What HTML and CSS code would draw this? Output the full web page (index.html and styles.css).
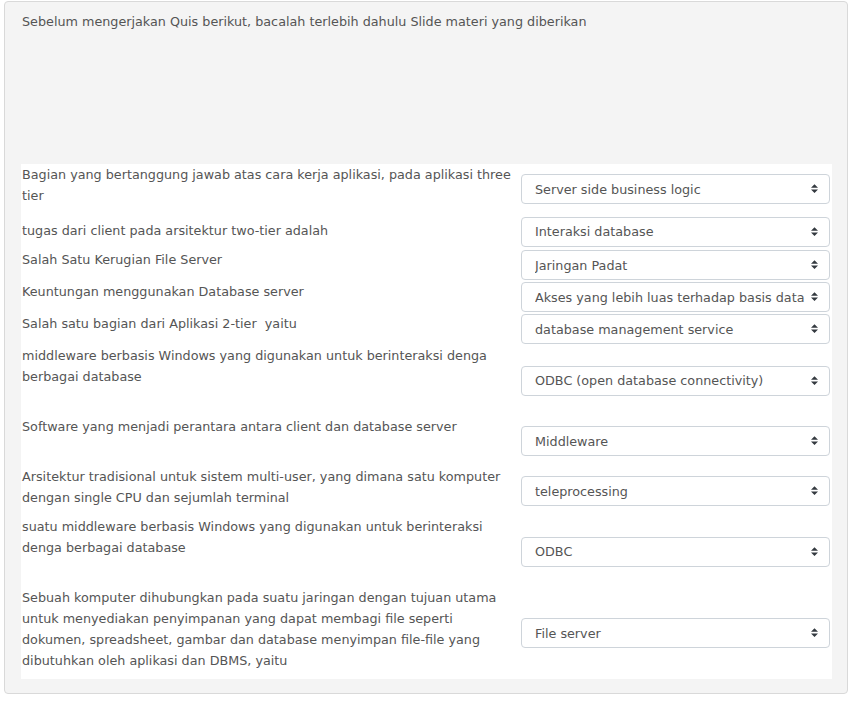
FILE: index.html
```html
<!DOCTYPE html>
<html lang="id">
<head>
<meta charset="utf-8">
<title>Quis</title>
<link rel="stylesheet" href="styles.css">
</head>
<body>
<div class="que">
  <div class="qtext">
    <p class="intro">Sebelum mengerjakan Quis berikut, bacalah terlebih dahulu Slide materi yang diberikan</p>
    <div class="media"></div>
  </div>
  <div class="answer">
    <div class="row">
      <div class="text"><p>Bagian yang bertanggung jawab atas cara kerja aplikasi, pada aplikasi three tier</p></div>
      <div class="control"><span class="sel"><select><option>Server side business logic</option></select><svg class="arrow" viewBox="0 0 4 5" width="7" height="9"><path d="M2 0L0 2h4zm0 5L0 3h4z"/></svg></span></div>
    </div>
    <div class="row">
      <div class="text pad-top"><p>tugas dari client pada arsitektur two-tier adalah</p></div>
      <div class="control"><span class="sel"><select><option>Interaksi database</option></select><svg class="arrow" viewBox="0 0 4 5" width="7" height="9"><path d="M2 0L0 2h4zm0 5L0 3h4z"/></svg></span></div>
    </div>
    <div class="row">
      <div class="text"><p>Salah Satu Kerugian File Server</p></div>
      <div class="control"><span class="sel"><select><option>Jaringan Padat</option></select><svg class="arrow" viewBox="0 0 4 5" width="7" height="9"><path d="M2 0L0 2h4zm0 5L0 3h4z"/></svg></span></div>
    </div>
    <div class="row">
      <div class="text"><p>Keuntungan menggunakan Database server</p></div>
      <div class="control"><span class="sel"><select><option>Akses yang lebih luas terhadap basis data</option></select><svg class="arrow" viewBox="0 0 4 5" width="7" height="9"><path d="M2 0L0 2h4zm0 5L0 3h4z"/></svg></span></div>
    </div>
    <div class="row">
      <div class="text"><p>Salah satu bagian dari Aplikasi 2-tier&nbsp; yaitu</p></div>
      <div class="control"><span class="sel"><select><option>database management service</option></select><svg class="arrow" viewBox="0 0 4 5" width="7" height="9"><path d="M2 0L0 2h4zm0 5L0 3h4z"/></svg></span></div>
    </div>
    <div class="row">
      <div class="text"><p>middleware berbasis Windows yang digunakan untuk berinteraksi denga berbagai database<br><br></p></div>
      <div class="control"><span class="sel"><select><option>ODBC (open database connectivity)</option></select><svg class="arrow" viewBox="0 0 4 5" width="7" height="9"><path d="M2 0L0 2h4zm0 5L0 3h4z"/></svg></span></div>
    </div>
    <div class="row">
      <div class="text"><p>Software yang menjadi perantara antara client dan database server<br><br></p></div>
      <div class="control"><span class="sel"><select><option>Middleware</option></select><svg class="arrow" viewBox="0 0 4 5" width="7" height="9"><path d="M2 0L0 2h4zm0 5L0 3h4z"/></svg></span></div>
    </div>
    <div class="row">
      <div class="text"><p>Arsitektur tradisional untuk sistem multi-user, yang dimana satu komputer dengan single CPU dan sejumlah terminal</p></div>
      <div class="control"><span class="sel"><select><option>teleprocessing</option></select><svg class="arrow" viewBox="0 0 4 5" width="7" height="9"><path d="M2 0L0 2h4zm0 5L0 3h4z"/></svg></span></div>
    </div>
    <div class="row">
      <div class="text"><p>suatu middleware berbasis Windows yang digunakan untuk berinteraksi denga berbagai database<br><br></p></div>
      <div class="control"><span class="sel"><select><option>ODBC</option></select><svg class="arrow" viewBox="0 0 4 5" width="7" height="9"><path d="M2 0L0 2h4zm0 5L0 3h4z"/></svg></span></div>
    </div>
    <div class="row">
      <div class="text"><p>Sebuah komputer dihubungkan pada suatu jaringan dengan tujuan utama untuk menyediakan penyimpanan yang dapat membagi file seperti dokumen, spreadsheet, gambar dan database menyimpan file-file yang dibutuhkan oleh aplikasi dan DBMS, yaitu</p></div>
      <div class="control"><span class="sel"><select><option>File server</option></select><svg class="arrow" viewBox="0 0 4 5" width="7" height="9"><path d="M2 0L0 2h4zm0 5L0 3h4z"/></svg></span></div>
    </div>
  </div>
</div>
</body>
</html>
```

FILE: styles.css
```css
html, body {
  margin: 0;
  padding: 0;
  background: #ffffff;
}
body {
  padding: 1px 0 0 4px;
  font-family: "DejaVu Sans", "Noto Sans", sans-serif;
  font-size: 12.75px;
  line-height: 21px;
  color: #555555;
}
.que {
  width: 844px;
  box-sizing: border-box;
  background: #f4f4f4;
  border: 1px solid #d9d9d9;
  border-radius: 4px;
  padding: 9px 15px 14px 16px;
}
.qtext p {
  margin: 0;
}
.intro {
  padding-left: 1px;
}
.media {
  height: 132px;
}
.answer {
  background: #ffffff;
  width: 811px;
}
.row {
  display: grid;
  grid-template-columns: 500px 311px;
  align-items: center;
}
.text {
  align-self: start;
  padding: 0 8px 0 1px;
}
.text p {
  margin: 0 0 8px;
}
.text.pad-top {
  padding-top: 6px;
}
.control {
  padding: 1px 2px 1px 0;
}
.sel {
  position: relative;
  display: block;
  width: 309px;
}
.sel select {
  -webkit-appearance: none;
  appearance: none;
  display: block;
  width: 309px;
  height: 30px;
  box-sizing: border-box;
  margin: 0;
  padding: 0 22px 0 13px;
  border: 1px solid #ced4da;
  border-radius: 4px;
  background: #ffffff;
  font-family: "DejaVu Sans", "Noto Sans", sans-serif;
  font-size: 12.75px;
  color: #555555;
}
.arrow {
  position: absolute;
  right: 12px;
  top: 10px;
  fill: #343a40;
  pointer-events: none;
}
```
